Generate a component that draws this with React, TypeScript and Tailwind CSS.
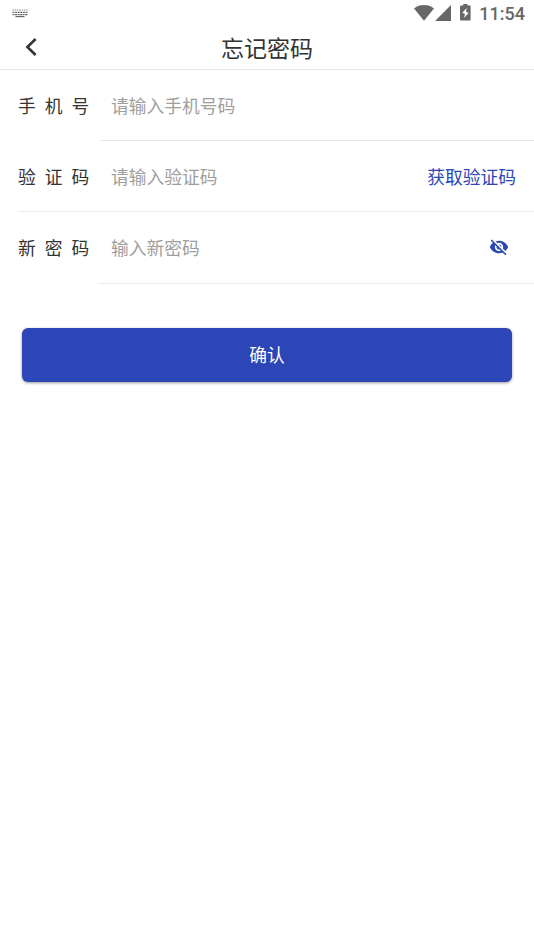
import { useState } from "react";
import { MdVisibility, MdVisibilityOff } from "react-icons/md";

function StatusBar() {
  return (
    <div className="flex h-7 items-center justify-between pl-3 pr-[9px] text-[#676767]">
      {/* KEYBOARD */}
      <svg width="17" height="10" viewBox="0 0 17 10" stroke="currentColor" fill="none">
        <path d="M.5 1h15.5" strokeWidth="1.1" strokeDasharray="1.4 .9" opacity=".8" />
        <path d="M.5 3.4h15.500" strokeWidth="1.2" strokeDasharray="2 .6" />
        <path d="M.5 5.600h15.500" strokeWidth="1.200" strokeDasharray="2 .5" />
        <path d="M3.500 7.600h9" strokeWidth="1.200" />
      </svg>

      <div className="flex items-center">
        {/* WIFI */}
        <svg width="20" height="16" viewBox="0 0 20 16" fill="currentColor" className="mb-[3px]">
          <path d="M10 15.8 0 3.4C2.8 1.2 6.2 0 10 0s7.2 1.2 10 3.4z" />
        </svg>
        {/* SIGNAL */}
        <svg width="16" height="16" viewBox="0 0 16 16" fill="currentColor" className="mb-[2px] ml-[1px]">
          <path d="M0 16 16 0v16z" />
        </svg>
        {/* BATTERY */}
        <svg width="11" height="17" viewBox="0 0 11 17" fill="currentColor" className="mb-[3px] ml-[9px]">
          <path
            fillRule="evenodd"
            d="M3.3 0h4.2v1.6h2.2c.5 0 .9.4.9.9v13.1c0 .5-.4.9-.9.9H.9c-.5 0-.9-.4-.9-.9V2.5c0-.5.4-.9.9-.9h2.4zM6.8 4 2.3 8.7 5 10l-1 4 4.600-5L6 7.700z"
          />
        </svg>
        <span className="ml-[8px] font-['Roboto'] text-[18px] font-medium leading-7">11:54</span>
      </div>
    </div>
  );
}

function Label({ text }: { text: string }) {
  return (
    <label className="w-[93px] shrink-0 whitespace-nowrap tracking-[9px] text-[#333]">
      {text}
    </label>
  );
}

const inputClass =
  "min-w-0 flex-1 bg-transparent text-[17.75px] outline-none placeholder:text-[#9e9e9e] placeholder:opacity-100";

export default function App() {
  const [visible, setVisible] = useState(false);

  return (
    <div className="min-h-[950px] w-full bg-white font-['Noto_Sans_CJK_SC','Noto_Sans',sans-serif] text-[17.75px]">
      <StatusBar />

      {/* HEADER */}
      <header className="grid h-[42px] grid-cols-[60px_1fr_60px] items-center border-b border-[#e5e5e5] pb-[3px]">
        <button className="pl-[25px]" aria-label="返回">
          <svg width="12" height="18" viewBox="0 0 12 18" fill="none" stroke="#333" strokeWidth="2.6">
            <path d="M10.6 1 2.4 9l8.2 8" />
          </svg>
        </button>
        <h1 className="text-center text-[23px] leading-[38px] text-[#333]">忘记密码</h1>
      </header>

      {/* FORM */}
      <form onSubmit={(e) => e.preventDefault()}>
        <div className="flex h-[70px] items-center pl-[18px]">
          <Label text="手机号" />
          <input className={inputClass} type="tel" placeholder="请输入手机号码" />
        </div>
        <div className="ml-[99.5px] h-px bg-[#e5e5e5]" />

        <div className="flex h-[70px] items-center pl-[18px] pr-[18px]">
          <Label text="验证码" />
          <input className={inputClass} placeholder="请输入验证码" />
          <button type="button" className="shrink-0 text-[#2c46b8]">
            获取验证码
          </button>
        </div>
        <div className="ml-[18px] h-px bg-[#ececec]" />

        <div className="flex h-[71px] items-center pl-[18px] pr-[25px]">
          <Label text="新密码" />
          <input
            className={inputClass}
            type={visible ? "text" : "password"}
            placeholder="输入新密码"
          />
          <button
            type="button"
            className="shrink-0 pb-0.5 text-[#2c46b8]"
            aria-label="显示密码"
            onClick={() => setVisible(!visible)}
          >
            {visible ? <MdVisibility size={20} /> : <MdVisibilityOff size={20} />}
          </button>
        </div>
        <div className="ml-[99px] h-px bg-[#e9e9e9]" />

        <div className="px-[22px] pt-11">
          <button className="h-[53.5px] w-full rounded-md bg-[#2c46b8] text-white shadow-[0_1px_3px_rgba(0,0,0,0.4)]">
            确认
          </button>
        </div>
      </form>
    </div>
  );
}
